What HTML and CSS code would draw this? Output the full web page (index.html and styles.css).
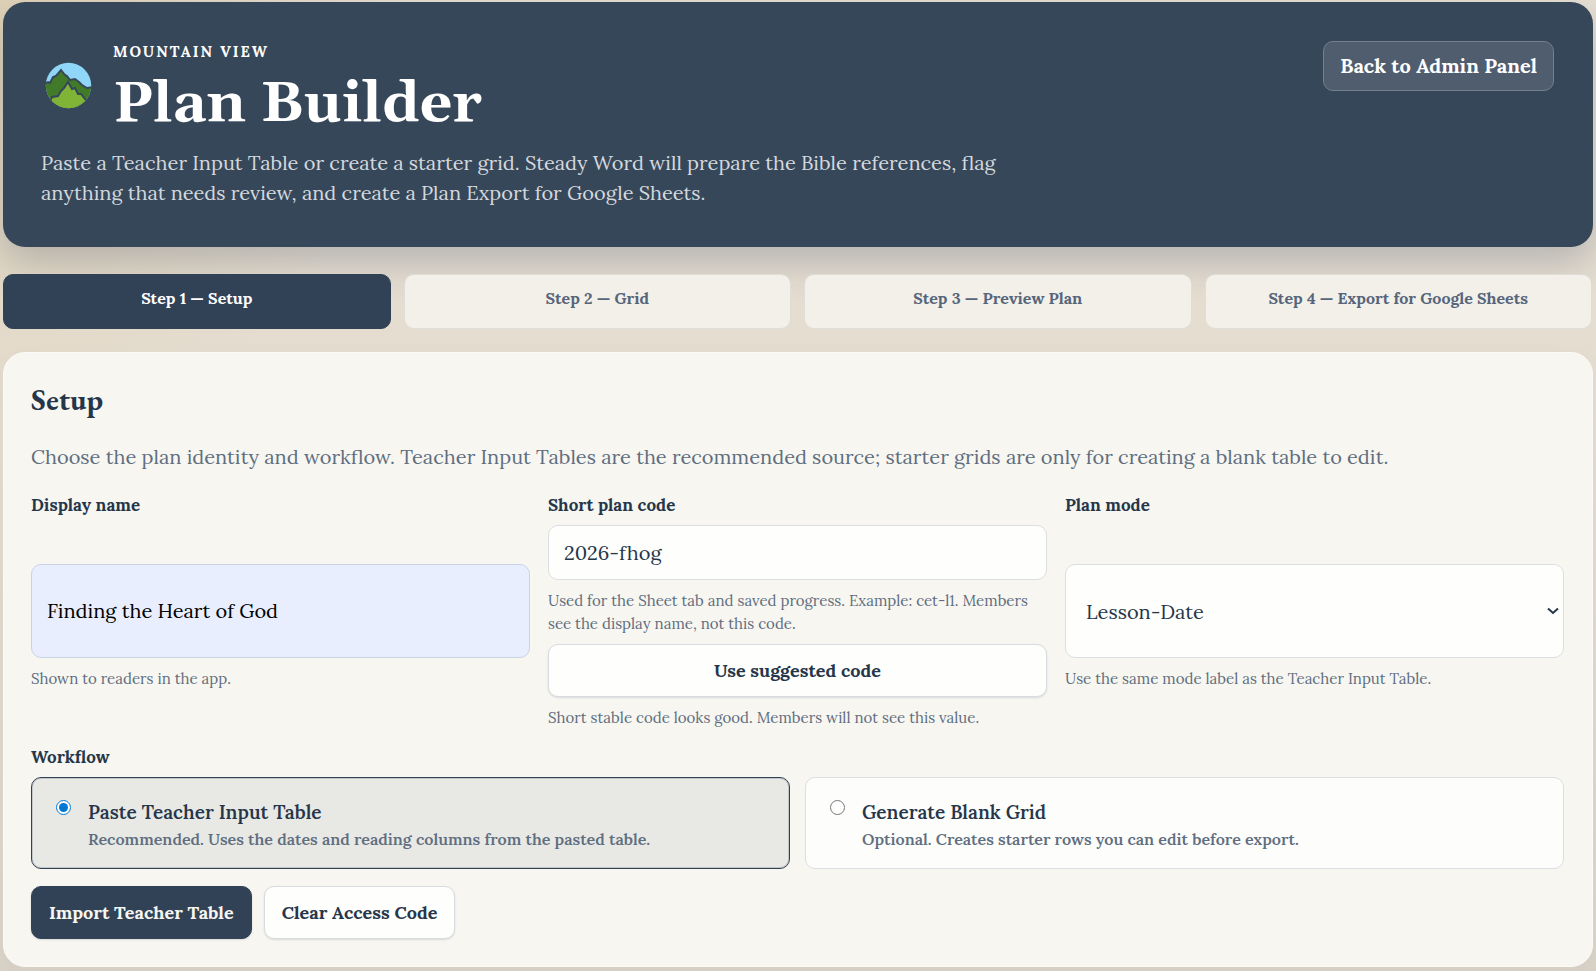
FILE: index.html
```html
<!DOCTYPE html>
<html lang="en">
<head>
    <meta charset="UTF-8">
    <meta name="viewport" content="width=device-width, initial-scale=1">
    <title>Plan Builder</title>
    <link rel="stylesheet" href="styles.css">
</head>
<body>
    <header class="hero">
        <div class="hero-copy">
            <div class="brand">
                <svg class="brand-logo" viewBox="0 0 56 56" aria-hidden="true">
                    <defs>
                        <clipPath id="logo-clip"><circle cx="27.5" cy="28.5" r="22.7"/></clipPath>
                    </defs>
                    <g clip-path="url(#logo-clip)">
                        <rect width="56" height="56" fill="#8fd6f9"/>
                        <path d="M3 27 L7 25 L9 26 L12 20 L15 19 L20 13 L24 18 L26 19 L29 23 L34 22 L38 25 L41 28 L46 31 L52 30 V56 H3 Z" fill="#417a29" stroke="#37475a" stroke-width="2"/>
                        <path d="M7 50 L11 40 L17 39 L20 34 L23 31 L27 25 L31 32 L34 31 L37 37 L40 37 L44 42 L49 50 V56 H7 Z" fill="#80b437" stroke="#37475a" stroke-width="2"/>
                    </g>
                </svg>
                <div>
                    <p class="eyebrow">Mountain View</p>
                    <h1>Plan Builder</h1>
                </div>
            </div>
            <p class="hero-text">Paste a Teacher Input Table or create a starter grid. Steady Word will prepare the Bible references, flag anything that needs review, and create a Plan Export for Google Sheets.</p>
        </div>
        <a class="back-link" href="#">Back to Admin Panel</a>
    </header>

    <nav class="steps">
        <button type="button" class="step active">Step 1 — Setup</button>
        <button type="button" class="step">Step 2 — Grid</button>
        <button type="button" class="step">Step 3 — Preview Plan</button>
        <button type="button" class="step">Step 4 — Export for Google Sheets</button>
    </nav>

    <main class="panel">
        <h2>Setup</h2>
        <p class="intro">Choose the plan identity and workflow. Teacher Input Tables are the recommended source; starter grids are only for creating a blank table to edit.</p>

        <div class="fields">
            <div class="field">
                <label for="display-name">Display name</label>
                <input type="text" id="display-name" class="autofilled" value="Finding the Heart of God">
                <p class="help">Shown to readers in the app.</p>
            </div>
            <div class="field">
                <label for="plan-code">Short plan code</label>
                <input type="text" id="plan-code" value="2026-fhog">
                <p class="help">Used for the Sheet tab and saved progress. Example: cet-l1. Members see the display name, not this code.</p>
                <button type="button" class="btn">Use suggested code</button>
                <p class="help">Short stable code looks good. Members will not see this value.</p>
            </div>
            <div class="field">
                <label for="plan-mode">Plan mode</label>
                <div class="select-wrap">
                    <select id="plan-mode">
                        <option>Lesson-Date</option>
                    </select>
                    <svg class="chevron" viewBox="0 0 12 8" aria-hidden="true"><path d="M1 1.5 L6 6 L11 1.5" fill="none" stroke="currentColor" stroke-width="2"/></svg>
                </div>
                <p class="help">Use the same mode label as the Teacher Input Table.</p>
            </div>
        </div>

        <fieldset class="workflow">
            <legend>Workflow</legend>
            <div class="choices">
                <label class="choice selected">
                    <input type="radio" name="workflow" value="paste" checked>
                    <span>
                        <strong>Paste Teacher Input Table</strong>
                        <small>Recommended. Uses the dates and reading columns from the pasted table.</small>
                    </span>
                </label>
                <label class="choice">
                    <input type="radio" name="workflow" value="grid">
                    <span>
                        <strong>Generate Blank Grid</strong>
                        <small>Optional. Creates starter rows you can edit before export.</small>
                    </span>
                </label>
            </div>
        </fieldset>

        <div class="actions">
            <button type="button" class="btn primary">Import Teacher Table</button>
            <button type="button" class="btn">Clear Access Code</button>
        </div>
    </main>
</body>
</html>
```

FILE: styles.css
```css
:root {
    --ink: #26364a;
    --navy: #314156;
    --muted: #5f6e80;
    --line: #dcdee2;
    --white: #fefefc;
}

* {
    box-sizing: border-box;
}

body {
    margin: 0;
    padding: 2px 3px 4px;
    min-height: 100vh;
    font-family: Lora, "Liberation Serif", serif;
    font-size: 20px;
    line-height: 30px;
    color: var(--ink);
    background:
        radial-gradient(circle at top left, rgba(214, 190, 140, 0.4), transparent 420px),
        linear-gradient(180deg, #e6dfd3 0%, #e4dccf 40%, #dbd3c8 100%);
}

h1, h2, p {
    margin: 0;
}

button, input, select {
    font: inherit;
    color: inherit;
}

/* header */
.hero {
    display: flex;
    justify-content: space-between;
    align-items: flex-start;
    padding: 39px 39px 39px 38px;
    border-radius: 22px;
    background: #37475a;
    color: #fff;
    box-shadow: 0 16px 36px rgba(49, 65, 86, 0.25);
}
.hero-copy {
    max-width: 970px;
}
.brand {
    display: flex;
    align-items: center;
    gap: 16px;
    margin-bottom: 19px;
}
.brand-logo {
    width: 56px;
    height: 56px;
}
.eyebrow {
    margin-bottom: 16px;
    font-size: 15px;
    line-height: 22px;
    font-weight: bold;
    letter-spacing: 2px;
    text-transform: uppercase;
}
h1 {
    font-family: Georgia, Gelasio, "Source Serif 4", serif;
    font-size: 57px;
    line-height: 50px;
}
.hero-text {
    color: #d3d8dd;
}
.back-link {
    padding: 9px 16px;
    border: 1px solid #74808d;
    border-radius: 10px;
    background: #4f5d6e;
    color: #fff;
    font-weight: bold;
    text-decoration: none;
}

/* step tabs */
.steps {
    display: grid;
    grid-template-columns: repeat(4, 1fr);
    gap: 13px;
    margin: 27px 1px 23px 0;
}
.step {
    padding: 11px 12px 17px;
    border: 1px solid #dfddd8;
    border-radius: 10px;
    background: #f3f0ea;
    color: #56657a;
    font-size: 16px;
    line-height: 25px;
    font-weight: bold;
}
.step.active {
    border-color: var(--navy);
    background: var(--navy);
    color: #fff;
}

/* setup panel */
.panel {
    padding: 27px 28px 27px 27px;
    border: 1px solid #fbfaf7;
    border-radius: 22px;
    background: #f7f6f1;
    box-shadow: 0 16px 36px rgba(49, 65, 86, 0.04);
}
h2 {
    font-family: "EB Garamond", "Liberation Serif", serif;
    font-size: 30px;
    line-height: 40px;
}
.intro {
    margin: 22px 0;
    color: var(--muted);
}
.fields {
    display: grid;
    grid-template-columns: repeat(3, 1fr);
    gap: 18px;
}
.field {
    display: grid;
    gap: 8px;
}
.field label,
.workflow legend {
    padding: 0;
    font-size: 17px;
    line-height: 23px;
    font-weight: bold;
}
.field input,
.field select {
    width: 100%;
    min-height: 55px;
    padding: 11px 15px;
    border: 1px solid var(--line);
    border-radius: 10px;
    background: var(--white);
}
.field .autofilled {
    border-color: #c9d3e6;
    background: #e8eefd;
    color: #000;
}
.select-wrap {
    display: grid;
}
.select-wrap > * {
    grid-area: 1 / 1;
}
.field select {
    appearance: none;
    padding: 12px 20px 11px;
}
.chevron {
    width: 12px;
    height: 8px;
    margin-right: 5px;
    place-self: center end;
    pointer-events: none;
}
.help {
    padding: 1px 0;
    font-size: 15px;
    line-height: 23px;
    color: var(--muted);
}
.btn {
    min-height: 53px;
    padding: 10px 17px;
    border: 1px solid #d8dbe0;
    border-radius: 10px;
    background: var(--white);
    font-size: 18px;
    font-weight: bold;
    box-shadow: 0 1px 2px rgba(49, 65, 86, 0.15);
}
.btn.primary {
    border-color: var(--navy);
    background: var(--navy);
    color: #f7f6f1;
}

/* workflow cards */
.workflow {
    margin: 16px 0 0;
    padding: 0;
    border: 0;
}
.choices {
    display: grid;
    grid-template-columns: repeat(2, 1fr);
    gap: 15px;
    margin-top: 8px;
}
.choice {
    display: flex;
    align-items: flex-start;
    gap: 17px;
    padding: 19px 24px 17px;
    border: 1px solid var(--line);
    border-radius: 10px;
    background: #fdfdfb;
    font-weight: bold;
}
.choice.selected {
    border-color: var(--navy);
    background: #e8e8e4;
    box-shadow: inset 0 0 0 1px rgba(49, 65, 86, 0.2);
}
.choice input {
    width: 15px;
    height: 15px;
    margin: 3px 0 0;
    accent-color: #0078d4;
}
.choice strong,
.choice small {
    display: block;
}
.choice strong {
    font-size: 19px;
    line-height: 30px;
    font-weight: 600;
}
.choice small {
    font-size: 16px;
    line-height: 24px;
    font-weight: 600;
    color: var(--muted);
}

.actions {
    display: flex;
    gap: 12px;
    margin-top: 17px;
}
```
